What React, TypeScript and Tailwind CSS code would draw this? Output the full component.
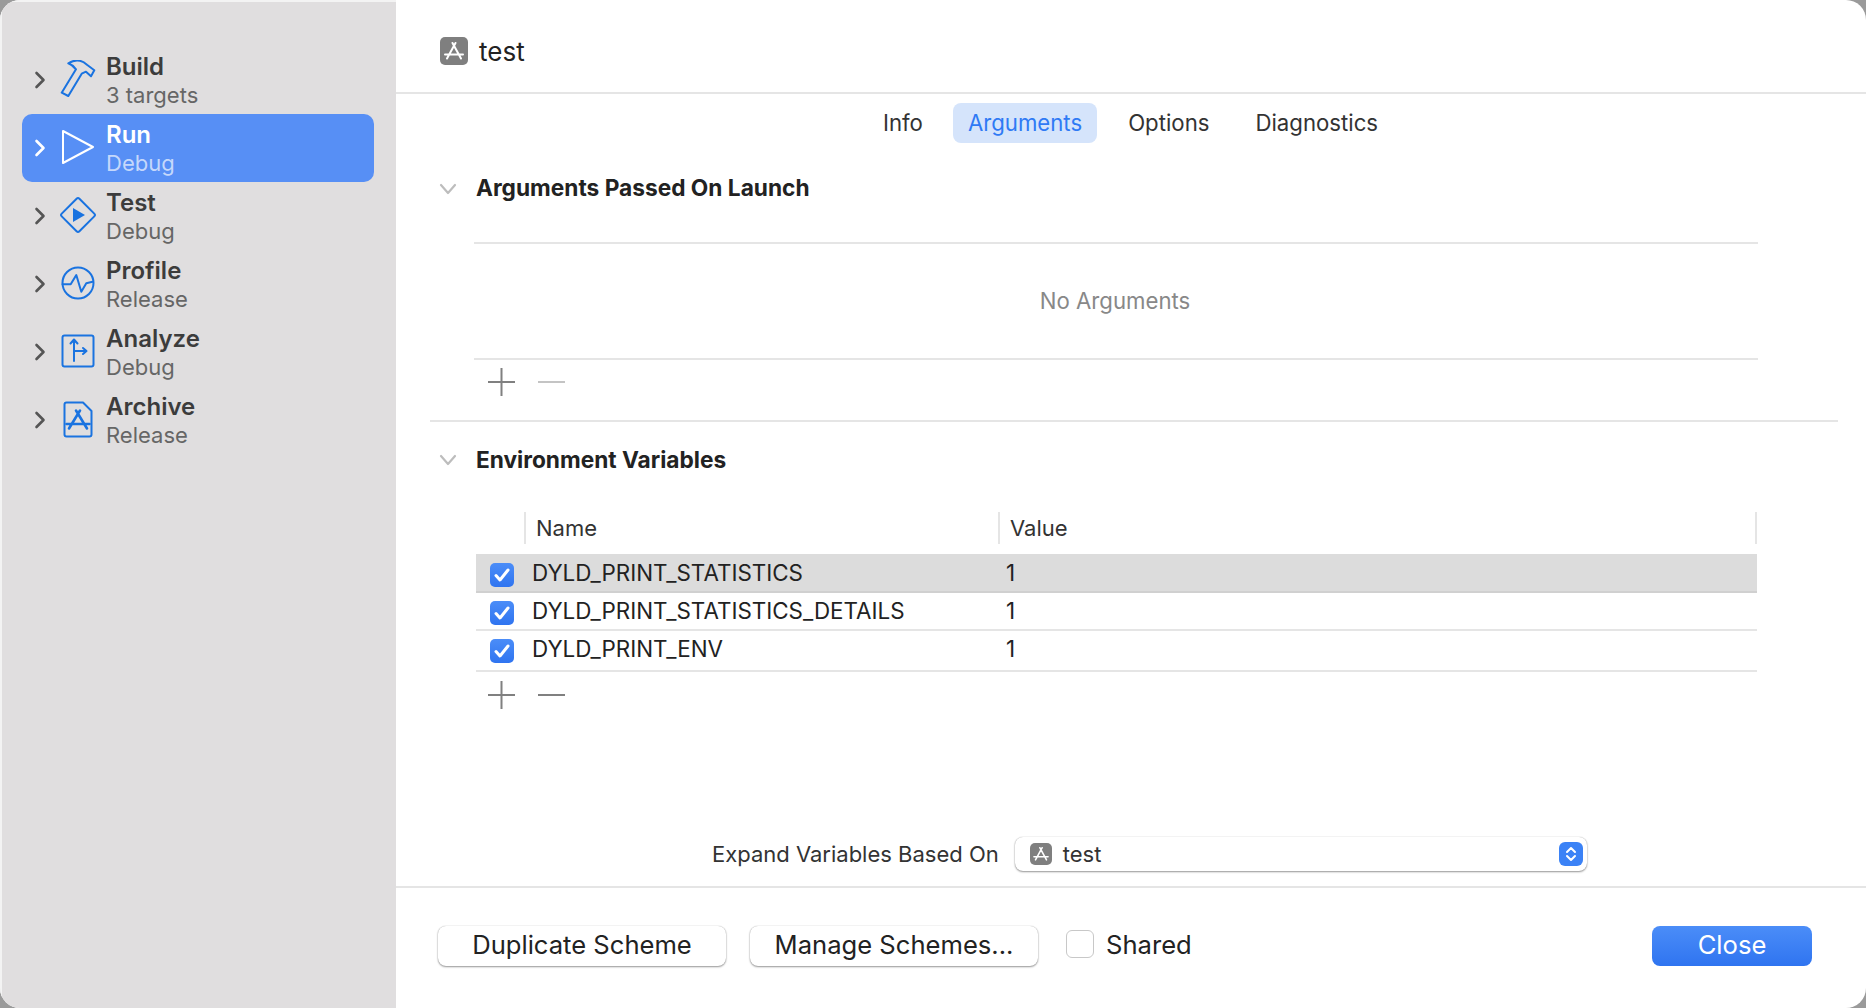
import React from "react";

const font = { fontFamily: "Inter, 'Liberation Sans', sans-serif" };

function Chevron({ white }: { white?: boolean }) {
  return (
    <svg width="12" height="18" viewBox="0 0 12 18" fill="none" stroke={white ? "#fff" : "#555"} strokeWidth="2.6" strokeLinecap="round" strokeLinejoin="round">
      <path d="M2.5 2 L9.5 9 L2.5 16" />
    </svg>
  );
}

function Hammer() {
  return (
    <svg width="36" height="38" viewBox="0 0 36 38" fill="none" stroke="#1a73e0" strokeWidth="2" strokeLinejoin="round" strokeLinecap="round">
      <path d="M8.3 3.3 C12 1 17 0 20 0.8 C23 1.5 25 3 27.3 5 L34.3 10.3 L31 16.3 L26 11.7 L21.7 13.7 L8.3 36 L1.7 32.7 L16 9.3 C14 6.5 11.5 4.5 8.3 3.3 Z" />
    </svg>
  );
}
function Play() {
  return (
    <svg width="34" height="36" viewBox="0 0 34 36" fill="none" stroke="#fff" strokeWidth="2" strokeLinejoin="round">
      <path d="M2 2 L32 18 L2 34 Z" />
    </svg>
  );
}
function TestIcon() {
  return (
    <svg width="38" height="38" viewBox="0 0 38 38" fill="none" stroke="#1a73e0" strokeWidth="2" strokeLinejoin="round">
      <rect x="6.5" y="6.5" width="25" height="25" rx="2" transform="rotate(45 19 19)" />
      <path d="M14 12 L26 19 L14 26 Z" fill="#1a73e0" stroke="none" />
    </svg>
  );
}
function ProfileIcon() {
  return (
    <svg width="34" height="34" viewBox="0 0 34 34" fill="none" stroke="#1a73e0" strokeWidth="2" strokeLinejoin="round" strokeLinecap="round">
      <circle cx="17" cy="17" r="15.5" />
      <path d="M1.5 18.3 H9.7 L15.3 9 L20.3 25.7 L25.3 17.3 L31.5 15.7" />
    </svg>
  );
}
function AnalyzeIcon() {
  return (
    <svg width="34" height="34" viewBox="0 0 34 34" fill="none" stroke="#1a73e0" strokeWidth="2" strokeLinejoin="round" strokeLinecap="round">
      <rect x="1.5" y="1.5" width="31" height="31" rx="2" />
      <path d="M13 27 V6 M9.5 9.5 L13 5.5 L16.5 9.5 M13 17 H25 M22 14 L25.5 17 L22 20" />
    </svg>
  );
}
function ArchiveIcon() {
  return (
    <svg width="30" height="37" viewBox="0 0 30 37" fill="none">
      <path d="M3.5 1.5 H20 L28.5 10 V33.5 Q28.5 35.5 26.5 35.5 H3.5 Q1.5 35.5 1.5 33.5 V3.5 Q1.5 1.5 3.5 1.5 Z" stroke="#1a73e0" strokeWidth="2" strokeLinejoin="round" />
      <g stroke="#1a73e0" strokeWidth="2.6" strokeLinecap="round">
        <path d="M13 9.5 L24 27.5 M17 9.5 L6 27.5 M3.5 23 H26.5" />
      </g>
    </svg>
  );
}
function AppIcon({ size }: { size: number }) {
  return (
    <span className="flex items-center justify-center rounded-[5px] bg-[#7f7f7f]" style={{ width: size, height: size }}>
      <svg width={size} height={size} viewBox="0 0 28 28" fill="none" stroke="#fff" strokeWidth="2" strokeLinecap="round">
        <path d="M12.5 6 L21 21.5 M15.5 6 L7 21.5 M5 17.5 H23" />
      </svg>
    </span>
  );
}

function Check() {
  return (
    <span className="flex h-6 w-6 items-center justify-center rounded-[5px] bg-gradient-to-b from-[#4b8df8] to-[#2f74f0]">
      <svg width="16" height="14" viewBox="0 0 16 14" fill="none" stroke="#fff" strokeWidth="3" strokeLinecap="round" strokeLinejoin="round">
        <path d="M2 7.5 L6 12 L14 2" />
      </svg>
    </span>
  );
}

function SmallChevronDown() {
  return (
    <svg width="18" height="12" viewBox="0 0 18 12" fill="none" stroke="#bdbdbd" strokeWidth="2.2" strokeLinecap="round" strokeLinejoin="round">
      <path d="M2 2 L9 10 L16 2" />
    </svg>
  );
}

function PlusMinus({ disabledMinus }: { disabledMinus?: boolean }) {
  return (
    <div className="flex h-[38px] items-center gap-[23px] pl-[14px]">
      <svg width="27" height="28" viewBox="0 0 27 28" stroke="#808080" strokeWidth="2"><path d="M0 14 H27 M13.5 0 V28" /></svg>
      <svg width="27" height="28" viewBox="0 0 27 28" stroke={disabledMinus ? "#c4c4c4" : "#808080"} strokeWidth="2"><path d="M0 14 H27" /></svg>
    </div>
  );
}

const schemes = [
  { t: "Build", s: "3 targets", icon: <Hammer /> },
  { t: "Run", s: "Debug", icon: <Play />, active: true },
  { t: "Test", s: "Debug", icon: <TestIcon /> },
  { t: "Profile", s: "Release", icon: <ProfileIcon /> },
  { t: "Analyze", s: "Debug", icon: <AnalyzeIcon /> },
  { t: "Archive", s: "Release", icon: <ArchiveIcon /> },
];

const envs = [
  { n: "DYLD_PRINT_STATISTICS", h: "h-[39px] pt-[9px] border-[#d0d0d0] bg-[#dcdcdc]" },
  { n: "DYLD_PRINT_STATISTICS_DETAILS", h: "h-[38px] pt-[8px] border-[#e5e5e5]" },
  { n: "DYLD_PRINT_ENV", h: "h-[41px] pt-[8px] border-[#e5e5e5]" },
];

export default function App() {
  return (
    <div className="h-[1008px] w-[1866px] overflow-hidden bg-[#9a9a9a]" style={font}>
      <div className="flex h-full w-full overflow-hidden rounded-[20px] bg-white">
        <aside className="h-full w-[396px] shrink-0 border-l-2 border-t-2 border-[#f3f3f3] bg-[#e0dedf] pl-[20px] pr-[22px] pt-[44px]">
          {schemes.map((r) => (
            <div key={r.t} className={`flex h-[68px] items-center rounded-[10px] ${r.active ? "bg-[#578ff5]" : ""}`}>
              <span className="ml-[12px] flex w-[12px] justify-center"><Chevron white={r.active} /></span>
              <span className="ml-[13px] -mt-[2px] flex w-[38px] justify-center">{r.icon}</span>
              <div className="ml-[9px] -mt-[2px] flex flex-col">
                <span className={`text-[24px] font-semibold leading-[31px] ${r.active ? "text-white" : "text-[#3c3c3c]"}`}>{r.t}</span>
                <span className={`text-[22px] leading-[26px] ${r.active ? "text-[#c5d8fb]" : "text-[#666]"}`}>{r.s}</span>
              </div>
            </div>
          ))}
        </aside>
        <main className="flex h-full min-w-0 flex-1 flex-col">
          <header className="flex h-[94px] shrink-0 items-center gap-[11px] border-b-2 border-[#e5e5e5] pl-[44px] pt-[10px]">
            <AppIcon size={28} />
            <span className="text-[26px] text-[#222]">test</span>
          </header>
          <nav className="flex h-[49px] shrink-0 items-end justify-center text-[22.2px] text-[#333]">
            <div className="ml-[-1px] flex h-[40px] items-center gap-[2px]">
              <span className="px-[15px]">Info</span>
              <span className="ml-[13px] flex h-[40px] items-center rounded-[8px] bg-[#d5e4fb] px-[15px] text-[#2f7af5]">Arguments</span>
              <span className="ml-[14px] px-[15px]">Options</span>
              <span className="ml-[14px] px-[15px]">Diagnostics</span>
            </div>
          </nav>
          <section className="flex h-[99px] shrink-0 items-center pb-[8px] pl-[43px]">
            <SmallChevronDown />
            <h2 className="ml-[19px] text-[22.7px] font-bold text-[#222]">Arguments Passed On Launch</h2>
          </section>
          <div className="ml-[78px] mr-[108px] flex h-[118px] shrink-0 items-center justify-center border-y-2 border-[#e5e5e5] pr-[2px] text-[22.2px] text-[#888]">No Arguments</div>
          <div className="ml-[78px] h-[60px] shrink-0 pt-[3px]"><PlusMinus disabledMinus /></div>
          <div className="ml-[34px] mr-[28px] h-[2px] shrink-0 bg-[#e5e5e5]" />
          <section className="flex h-[76px] shrink-0 items-center pl-[43px]">
            <SmallChevronDown />
            <h2 className="ml-[19px] text-[22.7px] font-bold text-[#222]">Environment Variables</h2>
          </section>
          <div className="ml-[80px] mr-[109px] mt-[14px] flex h-[32px] shrink-0 text-[22px] text-[#333]">
            <div className="ml-[48px] flex w-[474px] items-center border-l-2 border-[#e5e5e5] pl-[10px]">Name</div>
            <div className="flex flex-1 items-center border-x-2 border-[#e5e5e5] pl-[10px]">Value</div>
          </div>
          <div className="ml-[80px] mr-[109px] mt-[10px] shrink-0 text-[22.4px] text-[#222]">
            {envs.map((e) => (
              <div key={e.n} className={`flex items-start border-b-2 ${e.h}`}>
                <span className="ml-[14px]"><Check /></span>
                <span className="ml-[18px] -mt-[2px] w-[474px] leading-[24px]">{e.n}</span>
                <span className="-mt-[2px] leading-[24px]">1</span>
              </div>
            ))}
          </div>
          <div className="ml-[78px] mt-[4px] shrink-0"><PlusMinus /></div>
          <div className="flex h-[172px] shrink-0 items-end pb-[15px] pl-[316px]">
            <span className="leading-[34px] text-[22px] text-[#333]">Expand Variables Based On</span>
            <div className="ml-[16px] flex h-[34px] w-[572px] items-center rounded-[8px] bg-white pl-[15px] pr-[4px] shadow-[0_1px_2px_rgba(0,0,0,0.4),0_0_1px_rgba(0,0,0,0.3)]">
              <AppIcon size={22} />
              <span className="ml-[11px] text-[22px] text-[#333]">test</span>
              <span className="ml-auto flex h-[24px] w-[24px] items-center justify-center rounded-[6px] bg-[#3b82f6]">
                <svg width="12" height="18" viewBox="0 0 12 18" fill="none" stroke="#fff" strokeWidth="2" strokeLinecap="round" strokeLinejoin="round"><path d="M2 7 L6 3 L10 7 M2 11 L6 15 L10 11" /></svg>
              </span>
            </div>
          </div>
          <div className="flex flex-1 items-start border-t-2 border-[#e5e5e5] pl-[42px] pt-[38px]">
            <button className="h-[40px] w-[288px] rounded-[8px] bg-white pb-[2px] text-[25.6px] text-[#222] shadow-[0_1px_2px_rgba(0,0,0,0.4),0_0_1px_rgba(0,0,0,0.3)]">Duplicate Scheme</button>
            <button className="ml-[24px] h-[40px] w-[288px] rounded-[8px] bg-white pb-[2px] text-[25.6px] text-[#222] shadow-[0_1px_2px_rgba(0,0,0,0.4),0_0_1px_rgba(0,0,0,0.3)]">Manage Schemes...</button>
            <span className="ml-[28px] mt-[4px] h-[28px] w-[28px] rounded-[6px] border border-[#c8c8c8] bg-white" />
            <span className="ml-[12px] text-[25.6px] leading-[38px] text-[#222]">Shared</span>
            <button className="ml-auto mr-[54px] h-[40px] w-[160px] rounded-[8px] bg-gradient-to-b from-[#4b8df8] to-[#2f74f0] pb-[2px] text-[25.6px] text-white">Close</button>
          </div>
        </main>
      </div>
    </div>
  );
}
